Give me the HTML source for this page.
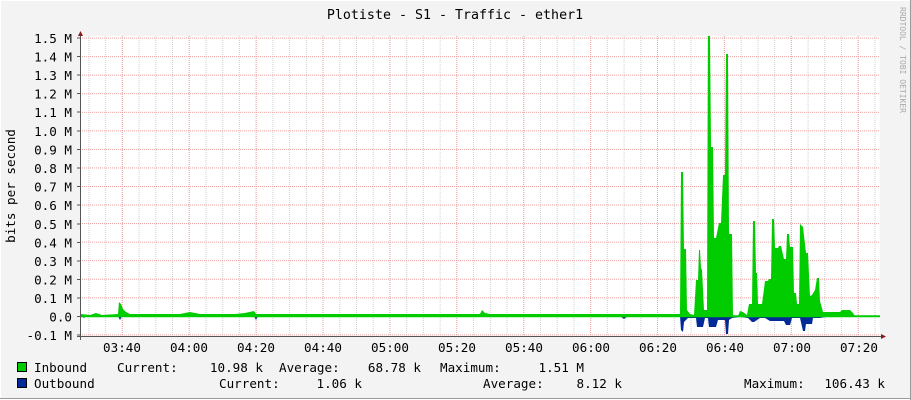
<!DOCTYPE html>
<html><head><meta charset="utf-8"><style>
html,body{margin:0;padding:0;background:#f3f3f3}
svg{display:block}
text{font-family:"DejaVu Sans Mono","Liberation Mono",monospace;font-size:12.6px;fill:#000}
</style></head><body>
<svg width="911" height="400" viewBox="0 0 911 400" xmlns="http://www.w3.org/2000/svg">
<defs>
<pattern id="vmin" patternUnits="userSpaceOnUse" x="88.4" y="0" width="16.725" height="4">
<line x1="0.5" y1="0" x2="0.5" y2="4" stroke="#d0d0d0" stroke-dasharray="1 1"/></pattern>
<pattern id="vmaj" patternUnits="userSpaceOnUse" x="121.8" y="0" width="66.9" height="4">
<line x1="0.5" y1="0" x2="0.5" y2="4" stroke="#f2a0a0" stroke-dasharray="1 1"/></pattern>
<pattern id="hmaj" patternUnits="userSpaceOnUse" x="0" y="37.6" width="4" height="18.55">
<line x1="0" y1="0.5" x2="4" y2="0.5" stroke="#eaa0a0" stroke-dasharray="1 1"/></pattern>
</defs>
<rect x="0" y="0" width="911" height="400" fill="#f3f3f3"/>
<rect x="0.5" y="0.5" width="910" height="399" fill="none" stroke="#fff"/>
<line x1="910.5" y1="0" x2="910.5" y2="400" stroke="#9a9a9a"/>
<line x1="0" y1="398.5" x2="911" y2="398.5" stroke="#9a9a9a"/>
<rect x="81" y="36" width="799" height="300" fill="#fff"/>
<rect x="81" y="36" width="799" height="300" fill="url(#vmin)"/>
<rect x="81" y="36" width="799" height="300" fill="url(#vmaj)"/>
<rect x="81" y="36" width="799" height="300" fill="url(#hmaj)"/>
<!-- inbound -->
<polygon fill="#00cc00" points="81,316 81,314 90,315 96,313 102,315 118,314 119,302 121,304 123,309 126,312 130,314 180,314 190,312 200,314 235,314 245,313 254,311 256,314 260,314 300,314 480,314 482,310 485,313 490,314 600,314 680,314 681,172 683,172 684,249 686,249 687,310 690,314 694,315 696,280 698,280 699,250 700,250 701,268 702,270 704,310 707,310 708,36 710,36 711,147 713,147 714,238 716,238 719,223 721,223 723,175 725,175 726,54 728,54 729,234 732,234 733,316 738,316 740,311 743,312 747,315 749,304 752,304 753,221 755,221 756,273 757,273 758,304 762,304 765,281 768,281 769,279 771,279 772,219 774,219 775,248 778,248 779,246 781,246 784,259 786,259 787,234 789,234 790,247 793,247 794,293 796,293 797,304 799,304 800,224 803,227 806,253 808,253 810,296 812,295 815,290 817,278 819,278 820,301 823,312 840,312 842,310 850,310 853,313 855,316"/>
<!-- outbound -->
<polygon fill="#002a97" points="81,316 84,318 86,316 118,316 120,320 122,316 254,316 256,320 258,316 620,316 624,319 628,316 680,316 681,330 683,332 684,322 688,318 696,318 697,327 703,327 705,318 708,318 709,327 716,327 718,320 725,320 726,334 728,334 729,320 732,318 740,317 748,318 752,322 754,322 760,318 765,318 770,321 784,321 786,325 790,325 792,318 800,318 803,331 805,331 806,324 812,324 813,318 820,318 826,317 850,317 855,316"/>
<line x1="81" y1="316.3" x2="880" y2="316.3" stroke="#00cc00" stroke-width="2"/>
<!-- axes -->
<line x1="80.5" y1="34" x2="80.5" y2="340" stroke="#555"/>
<line x1="77" y1="336.5" x2="882" y2="336.5" stroke="#555"/>
<polygon points="78,36 83,36 80.5,31" fill="#8b1a1a"/>
<polygon points="881,334 881,339 886,336.5" fill="#8b1a1a"/>
<g stroke="#555">
<line x1="77" y1="38" x2="81" y2="38"/><line x1="77" y1="56.5" x2="81" y2="56.5"/><line x1="77" y1="75" x2="81" y2="75"/><line x1="77" y1="93.5" x2="81" y2="93.5"/><line x1="77" y1="112" x2="81" y2="112"/><line x1="77" y1="131" x2="81" y2="131"/><line x1="77" y1="149.5" x2="81" y2="149.5"/><line x1="77" y1="168" x2="81" y2="168"/><line x1="77" y1="186.5" x2="81" y2="186.5"/><line x1="77" y1="205" x2="81" y2="205"/><line x1="77" y1="224" x2="81" y2="224"/><line x1="77" y1="242.5" x2="81" y2="242.5"/><line x1="77" y1="261" x2="81" y2="261"/><line x1="77" y1="279.5" x2="81" y2="279.5"/><line x1="77" y1="298" x2="81" y2="298"/><line x1="77" y1="316.5" x2="81" y2="316.5"/><line x1="77" y1="335" x2="81" y2="335"/>
</g>
<g text-anchor="end">
<text x="72" y="43">1.5 M</text><text x="72" y="61.5">1.4 M</text><text x="72" y="80">1.3 M</text><text x="72" y="98.5">1.2 M</text><text x="72" y="117">1.1 M</text><text x="72" y="136">1.0 M</text><text x="72" y="154.5">0.9 M</text><text x="72" y="173">0.8 M</text><text x="72" y="191.5">0.7 M</text><text x="72" y="210">0.6 M</text><text x="72" y="229">0.5 M</text><text x="72" y="247.5">0.4 M</text><text x="72" y="266">0.3 M</text><text x="72" y="284.5">0.2 M</text><text x="72" y="303">0.1 M</text><text x="72" y="321.5">0.0</text><text x="72" y="340">-0.1 M</text>
</g>
<g text-anchor="middle">
<text x="122" y="352">03:40</text><text x="189" y="352">04:00</text><text x="256" y="352">04:20</text><text x="323" y="352">04:40</text><text x="390" y="352">05:00</text><text x="457" y="352">05:20</text><text x="524" y="352">05:40</text><text x="591" y="352">06:00</text><text x="658" y="352">06:20</text><text x="725" y="352">06:40</text><text x="792" y="352">07:00</text><text x="859" y="352">07:20</text>
</g>
<text x="455" y="19" text-anchor="middle" style="font-size:13.3px">Plotiste - S1 - Traffic - ether1</text>
<text transform="translate(15,186) rotate(-90)" text-anchor="middle">bits per second</text>
<text transform="translate(900,60) rotate(90)" text-anchor="middle" style="font-size:8px;fill:#aaa">RRDTOOL / TOBI OETIKER</text>
<rect x="17.5" y="362.5" width="9" height="9" fill="#00cc00" stroke="#000"/>
<rect x="17.5" y="378.5" width="9" height="9" fill="#002a97" stroke="#000"/>
<text x="34" y="372">Inbound</text>
<text x="117" y="372">Current:</text>
<text x="263" y="372" text-anchor="end">10.98 k</text>
<text x="279" y="372">Average:</text>
<text x="421" y="372" text-anchor="end">68.78 k</text>
<text x="440" y="372">Maximum:</text>
<text x="584" y="372" text-anchor="end">1.51 M</text>
<text x="34" y="388">Outbound</text>
<text x="219" y="388">Current:</text>
<text x="362" y="388" text-anchor="end">1.06 k</text>
<text x="483" y="388">Average:</text>
<text x="622" y="388" text-anchor="end">8.12 k</text>
<text x="744" y="388">Maximum:</text>
<text x="885" y="388" text-anchor="end">106.43 k</text>
</svg>
</body></html>
